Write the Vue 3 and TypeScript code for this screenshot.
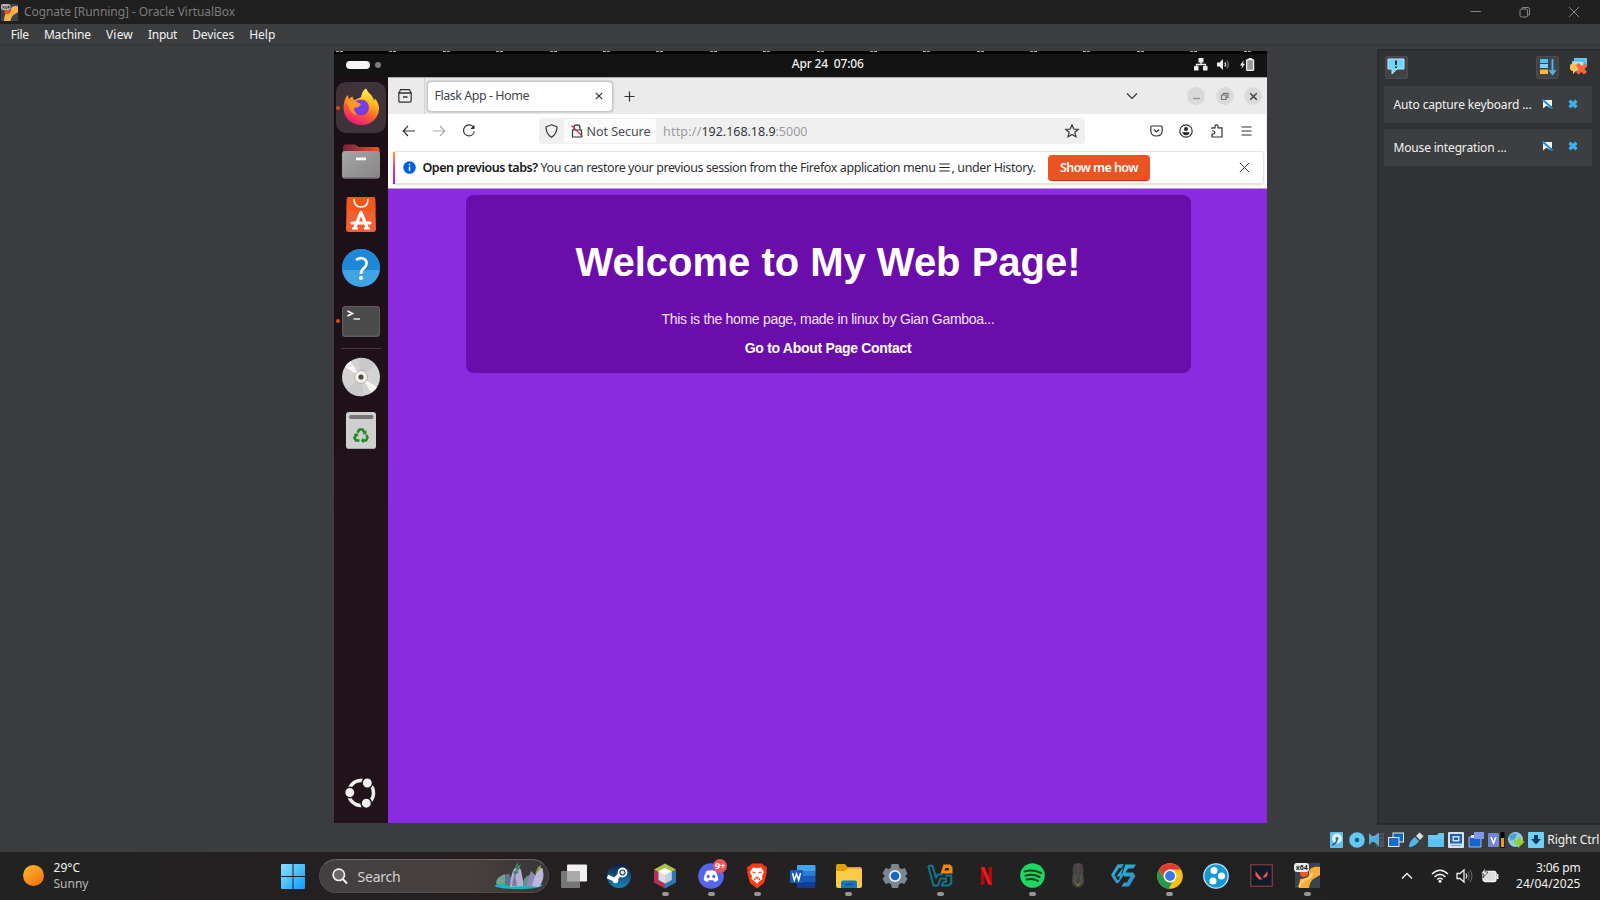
<script setup lang="ts">
import type { Directive } from 'vue'

/* Spreads a label's letters so that it fills the given width in pixels. */
const vFit: Directive<HTMLElement, number> = {
  mounted(el, { value }) {
    const n = (el.textContent ?? '').length
    const natural = el.getBoundingClientRect().width
    if (n > 1) el.style.letterSpacing = `${((value - natural) / n).toFixed(4)}px`
  },
}

const menus: { label: string; width: number }[] = [
  { label: 'File', width: 18 },
  { label: 'Machine', width: 47 },
  { label: 'View', width: 27 },
  { label: 'Input', width: 29 },
  { label: 'Devices', width: 42 },
  { label: 'Help', width: 26 },
]

const notices: { label: string; width: number }[] = [
  { label: 'Auto capture keyboard ...', width: 138 },
  { label: 'Mouse integration ...', width: 113 },
]

const ticks = Array.from({ length: 18 }, (_, i) => i)
</script>

<template>
  <div class="desktop">
    <header class="titlebar">
      <svg class="app-icon" width="17" height="17" viewBox="0 0 25 25">
        <rect width="25" height="25" fill="#3b4250" />
        <path d="M25 3.500C18 2 14 5 14 10C14 14 11 14 6 15L4 25H14C15 20 16 17 20 15L25 12Z" fill="#fbb040" />
        <circle cx="9" cy="11" r="4" fill="#f0542d" />
        <rect x="0" y="0" width="14" height="9" rx="3" fill="#b4b4b4" />
        <path d="M2.500 3L5 6.500M5 3L2.500 6.500M8 2.500L6.500 5V6.500H8.500V5M11.500 6.500V2.500L9.800 5H12.500" stroke="#222" fill="none" />
      </svg>
      <span class="t-title" v-fit="211">Cognate [Running] - Oracle VirtualBox</span>
      <div class="win-controls">
        <svg width="12" height="12" viewBox="0 0 12 12"><path d="M.5 5.500H11" /></svg>
        <svg width="12" height="12" viewBox="0 0 12 12"><rect x="1" y="3" width="7.500" height="8" rx="1.500" /><path d="M3.500 3V1.500H9Q10.500 1.500 10.500 3V9H8.500" /></svg>
        <svg width="12" height="12" viewBox="0 0 12 12"><path d="M1 1L11 11M11 1L1 11" /></svg>
      </div>
    </header>

    <nav class="menubar">
      <span v-for="m in menus" :key="m.label" v-fit="m.width">{{ m.label }}</span>
    </nav>

    <main class="workspace">
      <section class="guest">
        <div class="guest-top">
          <div class="ticks"><i v-for="t in ticks" :key="t"></i></div>
          <div class="gnome">
            <div class="pager"><b></b><i></i></div>
            <span class="clock" v-fit="72">Apr 24&nbsp; 07:06</span>
            <div class="gnome-tray">
              <svg width="14" height="13" viewBox="0 0 14 13"><g fill="#eee"><rect x="4.500" y="0" width="5" height="4.500" /><rect x="0" y="8" width="4.500" height="4.500" rx=".5" /><rect x="9" y="8" width="4.500" height="4.500" rx=".5" /></g><path d="M7 4V6.500M2.500 8.500V6.500H11.500V8.500" stroke="#eee" fill="none" stroke-width="1.300" /></svg>
              <svg width="13" height="13" viewBox="0 0 13 13"><path d="M0 4.500H2.500L6 1V12L2.500 8.500H0Z" fill="#eee" /><path d="M7.800 4.300Q9.500 6.500 7.800 8.700" stroke="#ddd" fill="none" stroke-width="1.300" /><path d="M9.800 2.500Q13 6.500 9.800 10.500" stroke="#777" fill="none" stroke-width="1.200" /></svg>
              <svg width="15" height="13" viewBox="0 0 15 13"><path d="M3.800 2L0 7.500H2.200L1.500 11L5 5.800H3Z" fill="#eee" /><rect x="6.600" y="1.600" width="7" height="10.800" rx="1" fill="#999" stroke="#f2f2f2" stroke-width="1.300" /><rect x="8.500" y="0" width="3.500" height="2" fill="#f2f2f2" /></svg>
            </div>
          </div>
        </div>

        <div class="guest-body">
          <aside class="dock">
            <div class="dock-item active">
              <svg width="50" height="51" viewBox="0 0 50 51">
                <defs>
                  <linearGradient id="ff" x1=".75" y1="0" x2=".3" y2="1"><stop offset="0" stop-color="#fff44f" /><stop offset=".35" stop-color="#ffb01f" /><stop offset=".65" stop-color="#ff5a32" /><stop offset="1" stop-color="#e81282" /></linearGradient>
                  <radialGradient id="ffg"><stop offset="0" stop-color="#6146ef" /><stop offset="1" stop-color="#8838cf" /></radialGradient>
                  <linearGradient id="fft" x1="0" y1="0" x2="0" y2="1"><stop offset="0" stop-color="#fff14a" /><stop offset="1" stop-color="#ffa21d" /></linearGradient>
                </defs>
                <path d="M11.500 13L13 17Q14.500 15 16.500 14.500Q16.500 17 18.500 18Q24 15.500 25.500 15Q26 10 30 6.500Q31.500 10.500 35 13Q37 15 38 19L39 16.500Q43.500 22 43 27.500C42 37 35 43 25.500 43C15.500 43 7.500 36 7.500 26C7.500 20 9 16 11.500 13Z" fill="url(#ff)" />
                <circle cx="25" cy="25.500" r="8" fill="url(#ffg)" />
                <path d="M25 15Q26 9 30 6.500Q31.500 10.500 35 13Q39 18 38 27Q36 20 31 18Q26 16.500 23 18Z" fill="url(#fft)" />
                <path d="M10 16.500L12 19Q19 18 25 22Q23.500 25.500 18 26Q17.500 30 22 33Q15 33 13 25Q10 22 10 16.500Z" fill="#ff9626" />
              </svg>
              <i class="run-dot"></i>
            </div>
            <div class="dock-item">
              <svg width="38" height="35" viewBox="0 0 38 35">
                <defs><linearGradient id="fo"><stop offset="0" stop-color="#77213f" /><stop offset="1" stop-color="#e95420" /></linearGradient><linearGradient id="fg" x1="0" y1="0" x2="1" y2="1"><stop offset="0" stop-color="#a5a5a5" /><stop offset="1" stop-color="#868686" /></linearGradient></defs>
                <path d="M1 3Q1 .5 3.500 .5H13L17 3H35Q37.500 3 37.500 5.500V14H.5Z" fill="url(#fo)" />
                <rect x="0" y="7" width="38" height="27.500" rx="3" fill="url(#fg)" /><path d="M2 34H36" stroke="#666" />
                <rect x="14" y="13.500" width="10" height="2.800" rx=".5" fill="#fff" />
              </svg>
            </div>
            <div class="dock-item">
              <svg width="30" height="35" viewBox="0 0 30 35">
                <path d="M3 0H27Q29 0 29.200 2L30 32Q30 35 27 35H3Q0 35 0 32L.8 2Q1 0 3 0Z" fill="#f06030" /><path d="M.8 2Q1 0 3 0H27Q29 0 29.200 2L29.500 14H.5Z" fill="#f4551d" />
                <path d="M8 2Q8 10 15 10Q22 10 22 2" stroke="#fff" stroke-width="1.500" fill="none" />
                <path d="M9 30L15 15.500L21 30M6 26H24" stroke="#fff" stroke-width="3.200" stroke-linecap="round" stroke-linejoin="round" fill="none" />
                <path d="M6 31.500H12M18 31.500H24" stroke="#fff" stroke-width="1.800" />
              </svg>
            </div>
            <div class="dock-item">
              <svg width="38" height="38" viewBox="0 0 38 38"><circle cx="19" cy="19" r="19" fill="#3fa3e4" /><path d="M0 21V19A19 19 0 0 1 38 19V21Z" fill="#1f87d8" /><path d="M14 11Q19 7.500 23 10.500Q26.500 14.500 22.500 18.500Q19 21 19 25" stroke="#fff" stroke-width="2.700" fill="none" /><circle cx="19" cy="29" r="2" fill="#fff" /></svg>
            </div>
            <div class="dock-item">
              <svg width="38" height="31" viewBox="0 0 38 31"><rect width="38" height="31" rx="3.500" fill="#5e5e5e" /><rect x="1" y="1" width="36" height="28.500" rx="3" fill="#4b4b4b" /><path d="M5.500 5L10.500 7.500L5.500 10" stroke="#fff" stroke-width="1.500" fill="none" /><path d="M11.500 13H18" stroke="#fff" stroke-width="1.300" /></svg>
              <i class="run-dot"></i>
            </div>
            <hr />
            <div class="dock-item">
              <svg width="38" height="38" viewBox="0 0 38 38"><circle cx="19" cy="19" r="19" fill="#d3d3d3" /><path d="M19 19L3 9Q5 5 8.500 3.500ZM19 19L35 29Q33 33 29.500 34.500Z" fill="#f7f7f5" /><path d="M19 19L16 0A19 19 0 0 1 33 6ZM19 19L22 38A19 19 0 0 1 5 32Z" fill="#c9c9c9" /><circle cx="19" cy="19" r="6.500" fill="#f3f0e8" stroke="#b7b2a5" /><circle cx="19" cy="19" r="2.600" fill="#4b4b4b" /></svg>
            </div>
            <div class="dock-item">
              <svg width="30" height="37" viewBox="0 0 30 37"><rect width="30" height="37" rx="3" fill="#cfcfcf" /><path d="M2 36.500H28" stroke="#aaa" /><rect x="3" y="3" width="24.500" height="4" rx="2" fill="#767676" /><g fill="none" stroke="#218c21" stroke-width="2.600"><path d="M11.500 20.500L13.500 17.500H16.500L18.500 20.500" /><path d="M20.500 23L21.500 25.500L20 28.500H17" /><path d="M13.500 28.500H10L8.500 26L10 23" /></g><path d="M20.500 18V22.500H16.500ZM17.500 25.500V31.500L14.800 28.500ZM7.500 22.500L11.500 20.800L12.500 24.500Z" fill="#218c21" /></svg>
            </div>
            <div class="dock-launch">
              <svg width="32" height="32" viewBox="0 0 32 32"><circle cx="16" cy="16" r="12.500" fill="none" stroke="#f1f1f1" stroke-width="3.500" /><g fill="#f1f1f1" stroke="#22121a" stroke-width="1.500"><circle cx="4.800" cy="15.500" r="5.200" /><circle cx="22.300" cy="6" r="5.200" /><circle cx="21.300" cy="26.200" r="5.200" /></g></svg>
            </div>
          </aside>

          <div class="browser">
            <div class="tabstrip">
              <div class="fxview"><svg width="14" height="14" viewBox="0 0 14 14"><path d="M2.500 .6H11.500L13 4H1Z" /><path d="M.8 4H13.200V11.500Q13.200 13.200 11.500 13.200H2.500Q.8 13.200 .8 11.500Z" /><path d="M5 8H9.500" stroke-width="1.500" /></svg></div>
              <div class="tab">
                <span v-fit="94.500">Flask App - Home</span>
                <svg width="8" height="8" viewBox="0 0 8 8"><path d="M.8 .8L7.200 7.200M7.200 .8L.8 7.200" /></svg>
              </div>
              <svg class="plus" width="11" height="11" viewBox="0 0 11 11"><path d="M5.500 .5V10.500M.5 5.500H10.500" /></svg>
              <svg class="chev" width="12" height="8" viewBox="0 0 12 8"><path d="M1 1.500L6 6.500L11 1.500" /></svg>
              <div class="circ"><svg width="9" height="9" viewBox="0 0 9 9"><path d="M1 6.500H8" stroke="#999" stroke-width="1.500" /></svg></div>
              <div class="circ"><svg width="9" height="9" viewBox="0 0 9 9"><path d="M1.500 3H6V7.500H1.500ZM3.500 3V1.300H8V5.500H6" stroke="#777" /></svg></div>
              <div class="circ"><svg width="9" height="9" viewBox="0 0 9 9"><path d="M1.200 1.200L7.800 7.800M7.800 1.200L1.200 7.800" stroke="#444" stroke-width="1.500" /></svg></div>
            </div>

            <div class="toolbar">
              <svg class="ic-back" width="14" height="12" viewBox="0 0 14 12"><path d="M6 1L1.200 6L6 11M1.500 6H13" /></svg>
              <svg class="ic-fwd" width="14" height="12" viewBox="0 0 14 12"><path d="M8 1L12.800 6L8 11M12.500 6H1" /></svg>
              <svg class="ic-reload" width="14" height="14" viewBox="0 0 14 14"><path d="M11.500 3.200A5.500 5.500 0 1 0 12.400 7.500" /><path d="M12.500 .8V5H8.300Z" fill="#333" stroke="none" /></svg>
              <div class="urlbar">
                <svg class="shield" width="13" height="14" viewBox="0 0 13 14"><path d="M6.500 .8L12 2.800C12 8 10.500 11 6.500 13.200C2.500 11 1 8 1 2.800Z" /></svg>
                <div class="insecure">
                  <svg width="12" height="14" viewBox="0 0 12 14"><path d="M3 6V3.500Q3 .8 6 .8Q9 .8 9 3.500V6M1.500 6H10.500V13H1.500Z" /><path d="M.5 1.500L11.500 12.500" stroke="#e22850" stroke-width="1.200" /></svg>
                  <span v-fit="64">Not Secure</span>
                </div>
                <div class="url"><span v-fit="38.500">http://</span><b v-fit="74">192.168.18.9</b><span v-fit="32">:5000</span></div>
                <svg class="star" width="14" height="14" viewBox="0 0 14 14"><path d="M7 1L8.800 5L13.200 5.400L9.900 8.300L10.900 12.800L7 10.400L3.100 12.800L4.100 8.300L.8 5.400L5.200 5Z" /></svg>
              </div>
              <svg class="ic-pocket" width="13" height="12" viewBox="0 0 13 12"><path d="M2 1H11Q12.200 1 12.200 2.200V5.500Q12.200 11 6.500 11Q.8 11 .8 5.500V2.200Q.8 1 2 1ZM3.800 4.500L6.500 7L9.200 4.500" /></svg>
              <svg class="ic-acct" width="14" height="14" viewBox="0 0 14 14"><circle cx="7" cy="7" r="6.200" /><circle cx="7" cy="5" r="2" fill="#222" stroke="none" /><path d="M3.300 8.300H10.700Q10 11.200 7 11.200Q4 11.200 3.300 8.300Z" fill="#222" stroke="none" /></svg>
              <svg class="ic-ext" width="14" height="14" viewBox="0 0 14 14"><path d="M2 5V3.800H5V2.500Q5 .8 6.500 .8Q8 .8 8 2.500V3.800H12V13H2V10H3.200Q4.800 10 4.800 8.500Q4.800 7 3.200 7H2" /></svg>
              <svg class="ic-menu" width="11" height="10" viewBox="0 0 11 10"><path d="M.5 1H10.500M.5 5H10.500M.5 9H10.500" /></svg>
            </div>

            <div class="infowrap">
              <div class="infobar">
                <i class="stripe"></i>
                <svg class="info" width="13" height="13" viewBox="0 0 13 13"><circle cx="6.500" cy="6.500" r="6.300" fill="#0560df" /><path d="M6.500 5.500V10M6.500 2.800V4.200" stroke="#fff" stroke-width="1.400" /></svg>
                <b v-fit="115">Open previous tabs?</b>
                <span class="msg" v-fit="395">You can restore your previous session from the Firefox application menu</span>
                <svg class="burger" width="11" height="9" viewBox="0 0 11 9"><path d="M.3 1H10.700M.3 4.500H10.700M.3 8H10.700" stroke="#222" stroke-width="1.100" /></svg>
                <span v-fit="84">, under History.</span>
                <button><span v-fit="78">Show me how</span></button>
                <svg class="close" width="11" height="11" viewBox="0 0 11 11"><path d="M.8 .8L10.200 10.200M10.200 .8L.8 10.200" stroke="#333" /></svg>
              </div>
            </div>

            <div class="page">
              <div class="hero">
                <h1><span v-fit="505">Welcome to My Web Page!</span></h1>
                <p><span v-fit="333">This is the home page, made in linux by Gian Gamboa...</span></p>
                <div class="links"><a v-fit="166.500">Go to About Page Contact</a></div>
              </div>
            </div>
          </div>
        </div>
      </section>

      <aside class="notify">
        <div class="notify-tools">
          <div class="tool"><svg width="18" height="18" viewBox="0 0 18 18"><path d="M1 1H17V11H10L5 16V11H1Z" fill="#74d4f7" stroke="#b6eaff" /><path d="M9 2.500V7M9 8.500V10" stroke="#222" stroke-width="1.800" /></svg></div>
          <div class="tool order"><svg width="18" height="18" viewBox="0 0 18 18"><path d="M1 1H9V5H1Z" fill="#52bff5" /><path d="M1 6H9V10H1Z" fill="#75d7ff" /><path d="M1 11.500H9V16H1Z" fill="#fbb832" /><path d="M13.500 1V15M10.500 12L13.500 16L16.500 12" stroke="#4bb8f2" stroke-width="1.900" fill="none" /></svg></div>
          <svg class="clear" width="18" height="18" viewBox="0 0 18 18"><path d="M4 1H17V8H4Z" fill="#66c6f1" /><path d="M2 4H14V10H2Z" fill="#a6e6ff" stroke="#3283b6" stroke-width=".6" /><path d="M0 9Q0 6.500 3 6.500H9V14H6L3 17V14Q0 14 0 11Z" fill="#f7c35f" /><path d="M6 8L9 6L11.500 9L15 6.500L17.500 9L14.500 12L17 15L14 17.500L11.500 15L8.500 17.500L6 15L8.500 12Z" fill="#f5653c" /></svg>
        </div>
        <div v-for="n in notices" :key="n.label" class="notice">
          <span v-fit="n.width">{{ n.label }}</span>
          <svg class="pin" width="11" height="10" viewBox="0 0 11 10"><path d="M1 1H10V7H8L9 9.500L5 7H4L1 9.500Z" fill="#f3f3f3" /><path d="M.5 .5L10.500 9.500" stroke="#1689d6" stroke-width="1.900" /></svg>
          <svg width="10" height="10" viewBox="0 0 10 10"><path d="M1.500 1.800L8.500 8.200M8.500 1.800L1.500 8.200" stroke="#3fb0f2" stroke-width="3.300" /></svg>
        </div>
      </aside>
    </main>

    <div class="statusbar">
      <svg width="16" height="16" viewBox="0 0 16 16"><rect x="1" width="13" height="16" rx="1" fill="#67bde9" /><circle cx="8" cy="6.500" r="5" fill="#d9f2ff" /><circle cx="8" cy="6.500" r="1.500" fill="#246ba2" /><path d="M8 8Q7 12 3 13" stroke="#20608c" stroke-width="1.500" fill="none" /></svg>
      <svg width="16" height="16" viewBox="0 0 16 16"><circle cx="9" cy="8" r="7.800" fill="#62c9f5" /><circle cx="9" cy="8" r="2.200" fill="#125a8a" /></svg>
      <svg width="16" height="16" viewBox="0 0 16 16"><rect x="8" y="1" width="8" height="14" fill="#4f565b" /><path d="M9 4H15M9 8H15M9 12H15" stroke="#343b40" /><path d="M1 1L4 4H6L11 1V14L6 10H4L1 13Z" fill="#56abd8" /></svg>
      <svg width="16" height="16" viewBox="0 0 16 16"><rect x="5" y="1" width="10.500" height="9" fill="#1665bd" stroke="#d9ebf8" /><rect x=".5" y="5.500" width="10.500" height="9" fill="#176bd0" stroke="#d9ebf8" /></svg>
      <svg width="16" height="16" viewBox="0 0 16 16"><path d="M1 15Q1 9 7 5L11 9Q7 15 1 15Z" fill="#4eb7e8" /><path d="M8 4L12 8L15.500 4L11.500 .5Z" fill="#e0e0e0" stroke="#888" stroke-width=".5" /></svg>
      <svg width="16" height="16" viewBox="0 0 16 16"><path d="M0 3H9L11 1H16V15H0Z" fill="#69c9ef" /><path d="M0 7H16V15H0Z" fill="#5cc3f0" /></svg>
      <svg width="16" height="16" viewBox="0 0 16 16"><rect width="16" height="16" rx="1" fill="#d3e1f4" /><rect x="2" y="2" width="12" height="9.500" fill="#1a5fb8" /><rect x="4.500" y="4" width="7" height="5.500" fill="#d3e1f4" /><rect x="6" y="5.500" width="4" height="2.500" fill="#1a5fb8" /><path d="M3 13.500H13" stroke="#7d9cc4" /></svg>
      <svg width="16" height="16" viewBox="0 0 16 16"><path d="M1 5H13V15H1Z" fill="#1764c8" stroke="#8fc1ee" /><rect x="6" y="0" width="10" height="7" fill="#8295e9" /><rect x="3" y="3" width="3" height="3" fill="#d3e6ff" /></svg>
      <svg width="16" height="16" viewBox="0 0 16 16"><rect x="0" y="1" width="11" height="14" rx="1" fill="#7189d5" /><path d="M3 5L5.500 11L8 5" fill="none" stroke="#fff" stroke-width="1.500" /><rect x="12.500" y="0" width="4" height="16" fill="#090909" /><rect x="13" y="6" width="3" height="9" fill="#e99910" /></svg>
      <svg width="16" height="16" viewBox="0 0 16 16"><circle cx="7.500" cy="7.500" r="7.500" fill="#8fcbe8" /><path d="M1 5Q4 0 9 2L7 7L3 9Z" fill="#4aa3c8" /><path d="M6 8H10V4L16.500 10L10 16V12.500H6Z" fill="#8ed334" /></svg>
      <svg width="16" height="16" viewBox="0 0 16 16"><rect width="16" height="16" rx="1" fill="#70cff6" /><path d="M6 3H10V7H13L8 12.500L3 7H6Z" fill="#12395a" /></svg>
      <span v-fit="52">Right Ctrl</span>
    </div>

    <footer class="taskbar">
      <div class="weather">
        <i class="sun"></i>
        <div><span class="temp" v-fit="26.500">29°C</span><span class="cond" v-fit="35">Sunny</span></div>
      </div>
      <svg class="start" width="24" height="25" viewBox="0 0 24 25"><defs><linearGradient id="wg" x1="0" y1="0" x2="1" y2="1"><stop offset="0" stop-color="#8be1ff" /><stop offset="1" stop-color="#0b9bfb" /></linearGradient></defs><path d="M1 0H11.500V12H0V1Q0 0 1 0ZM12.500 0H23Q24 0 24 1V12H12.500ZM0 13H11.500V25H1Q0 25 0 24ZM12.500 13H24V24Q24 25 23 25H12.500Z" fill="url(#wg)" /></svg>
      <div class="search">
        <svg width="16" height="17" viewBox="0 0 16 17"><circle cx="6.800" cy="6.800" r="5.700" fill="#6a6768" stroke="#f0f0f0" stroke-width="1.700" /><path d="M10.800 11L15 15.500" stroke="#f0f0f0" stroke-width="1.900" /></svg>
        <span v-fit="43">Search</span>
        <svg class="scene" width="52" height="28" viewBox="0 0 52 28"><path d="M1 24Q8 19 25 20Q42 20 50 23Q46 27 26 27Q6 27 1 24Z" fill="#13b7bd" /><path d="M3 22Q3 16 8 14Q11 11 15 14L17 22Z" fill="#6ea58a" /><path d="M12 23V14L15 11L18 15V24Z" fill="#60718b" /><path d="M17 25Q18 9 22 6Q26 4 28 8L31 24Z" fill="#b5b0d6" /><path d="M19 24Q20 14 22 11L24 24Z" fill="#8379a8" /><path d="M23 9V3L25 0V4L28 2L26 8ZM20 10Q23 7 26 10L22 13Z" fill="#3d8566" /><path d="M30 20Q32 13 38 13V24H30Z" fill="#5d9380" /><path d="M33 24L38 9L42 13V25Z" fill="#8f88b8" /><path d="M39 24Q42 12 46 6Q50 5 50 9Q52 17 46 25Z" fill="#bbb7dd" /><path d="M42 12L45 5L48 3L47 8Z" fill="#8ca23d" /></svg>
      </div>

      <div class="apps">
        <div class="app"><svg width="26" height="26" viewBox="0 0 26 26"><rect x="6" y="1.500" width="20" height="17" rx="1" fill="#f2f2f2" /><rect x="0" y="8" width="19" height="17" rx="1" fill="#777" /><path d="M6 8H19V18.500H6Z" fill="#aaa" /></svg></div>
        <div class="app"><svg width="24" height="24" viewBox="0 0 24 24"><defs><linearGradient id="st" x1="0" y1="0" x2="0" y2="1"><stop offset="0" stop-color="#101d45" /><stop offset="1" stop-color="#1588bd" /></linearGradient></defs><circle cx="12" cy="12" r="12" fill="url(#st)" /><path d="M.5 12.500L8 15.800L13 10" stroke="#fff" stroke-width="4" fill="none" /><circle cx="15.500" cy="8.500" r="4" fill="#19406c" stroke="#fff" stroke-width="1.800" /><circle cx="15.500" cy="8.500" r="2" fill="#d7e2ee" /><circle cx="8.500" cy="16.500" r="2.800" fill="#fff" /></svg></div>
        <div class="app run"><svg width="24" height="26" viewBox="0 0 24 26"><path d="M12 .5L23 6.500L12 13L1 6.500Z" fill="#a9c347" /><path d="M1 6.500V19.500L12 25.500V13Z" fill="#b33254" /><path d="M23 6.500V19.500L12 25.500V13Z" fill="#2f78b8" /><path d="M12 5L18.500 8.500V17L12 20.500L5.500 17V8.500Z" fill="#d7dfe2" /><path d="M12 5L18.500 8.500L12 12L5.500 8.500Z" fill="#fff" /><path d="M12 12L18.500 8.500V17L12 20.500Z" fill="#c3d0d8" /></svg></div>
        <div class="app run">
          <svg width="26" height="26" viewBox="0 0 26 26"><circle cx="13" cy="13" r="12.800" fill="#5765ee" /><path d="M8.500 8Q13 6.500 17.500 8Q20 12 20.300 17Q18.500 18.500 16.500 19L15.300 17.200H10.700L9.500 19Q7.500 18.500 5.700 17Q6 12 8.500 8Z" fill="#fff" /><ellipse cx="10.200" cy="13.500" rx="1.500" ry="1.800" fill="#5765ee" /><ellipse cx="15.800" cy="13.500" rx="1.500" ry="1.800" fill="#5765ee" /></svg>
          <em>9+</em>
        </div>
        <div class="app run"><svg width="22" height="26" viewBox="0 0 22 26"><path d="M6 .5H16L18.500 3L21 4L20.500 8L21 9L18 20L11 25.500L4 20L1 9L1.500 8L1 4L3.500 3Z" fill="#f83a17" /><path d="M11 5L15 4.500L18 9L16 13L16.500 16L13 18.500L11 21L9 18.500L5.500 16L6 13L4 9L7 4.500Z" fill="#fff" /><path d="M6.500 9L9.500 10M15.500 9L12.500 10M9.500 14L11 15.500L12.500 14M8 15.500L9.500 17M14 15.500L12.500 17" fill="none" stroke="#f83a17" stroke-width="1.200" /></svg></div>
        <div class="app"><svg width="26" height="24" viewBox="0 0 26 24"><path d="M7 1H24.500Q25.500 1 25.500 2V7H7Z" fill="#41a5ee" /><path d="M7 7H25.500V12.500H7Z" fill="#2b7cd3" /><path d="M7 12.500H25.500V18H7Z" fill="#185abd" /><path d="M7 18H25.500V23Q25.500 24 24.500 24H8Q7 24 7 23Z" fill="#103f91" /><rect x="0" y="6" width="13" height="13" rx="1" fill="#185abd" /><path d="M2.500 9L4.300 16L6.500 10L8.700 16L10.500 9" stroke="#fff" stroke-width="1.500" fill="none" /></svg></div>
        <div class="app run"><svg width="26" height="24" viewBox="0 0 26 24"><path d="M0 2Q0 0 2 0H9L11.500 3H24Q26 3 26 5V10H0Z" fill="#e0a111" /><path d="M0 7H9L12 4.500H24Q26 4.500 26 6.500V22Q26 24 24 24H2Q0 24 0 22Z" fill="#fbcb43" /><path d="M5 24V18.500Q5 16.500 7 16.500H19Q21 16.500 21 18.500V24Z" fill="#1478c1" /><path d="M9 20.500H17" stroke="#0b4f89" stroke-width="1.500" /></svg></div>
        <div class="app"><svg width="26" height="26" viewBox="0 0 26 26"><path d="M9.500 1H16.500L17.500 5L20 6L23 5L25.500 11L23 13L25.500 15.500L22.500 21L19 20L17 21.500L16 25H10L9 21.500L7 20L3.500 21L.5 15.500L3 13L.5 10.500L3.500 5L7 6L8.500 5Z" fill="#7b8791" /><circle cx="13" cy="13" r="6" fill="#e9edf0" /><circle cx="13" cy="13" r="4.300" fill="#176abb" /></svg></div>
        <div class="app run"><svg width="26" height="24" viewBox="0 0 26 24"><path d="M1.200 1.700H5.500L9 14L10.500 10.500H16M1.200 1.700L6.500 21.500H11L13.500 14.500H19V18H16.500L14.500 21.500H22L24.300 19V11.500H18" stroke="#12748a" stroke-width="2" fill="none" stroke-linejoin="round" /><path d="M13.500 9.500L16.500 .5H23L25.500 3V9.500ZM18.500 4L17.500 6.500H22V4Z" fill="#ef8712" fill-rule="evenodd" /></svg></div>
        <div class="app"><svg width="11" height="18" viewBox="0 0 11 18"><path d="M0 0H3.500V17.500L0 18ZM7.500 0H11V18L7.500 17.500Z" fill="#b30710" /><path d="M0 0H3.500L11 18L7.300 17.500Z" fill="#ef1720" /></svg></div>
        <div class="app run"><svg width="25" height="25" viewBox="0 0 25 25"><circle cx="12.500" cy="12.500" r="12.300" fill="#1ed760" /><path d="M4.500 8.500Q13 6 21 10M5.500 12.700Q13 10.500 19.500 14M6.500 16.500Q13 15 18 18" stroke="#123c22" stroke-width="2" stroke-linecap="round" fill="none" /></svg></div>
        <div class="app"><svg width="14" height="25" viewBox="0 0 14 25"><path d="M3 1Q7-1 11 1Q13 5 12 11Q14 19 12 22Q7 27 2 22Q0 19 2 11Q1 5 3 1Z" fill="#474543" /><path d="M7 1V9M2 12L5 14L3 18L7 23L11 18L9 14L12 12" stroke="#696561" stroke-width=".8" fill="none" /><ellipse cx="7" cy="6" rx="1.500" ry="2.200" fill="#5d3567" /><path d="M5 20L7 23L9 20" stroke="#a67a41" stroke-width=".7" fill="none" /></svg></div>
        <div class="app"><svg width="25" height="23" viewBox="0 0 25 23"><defs><linearGradient id="th" x1="0" x2="1" y1="0" y2="1"><stop offset="0" stop-color="#1fc4cf" /><stop offset="1" stop-color="#3e79c7" /></linearGradient></defs><path d="M13 0L6.500 .5L0 11L5 19H7.500L9 16H6.500L3.500 11L8 4H10.500Z" fill="url(#th)" /><path d="M12.500 3L5.500 12.500H9L6.500 20L14 9.500H10.500Z" fill="url(#th)" /><path d="M14.500 .5H25L22.500 4.500H17L14.500 8.500H22L24.500 12L18 22.500H10.500L13 18.500H16L19.500 12.500H13.500L11.500 9Z" fill="url(#th)" /></svg></div>
        <div class="app run"><svg width="26" height="26" viewBox="0 0 26 26"><circle cx="13" cy="13" r="12.800" fill="#fbc116" /><path d="M1.900 6.600A12.800 12.800 0 0 1 24.100 6.600H13A6.400 6.400 0 0 0 7.500 16.200Z" fill="#df3d31" /><path d="M1.900 6.600L7.500 16.200A6.400 6.400 0 0 0 15.500 18.800L11.800 25.800A12.800 12.800 0 0 1 1.900 6.600Z" fill="#26984b" /><circle cx="13" cy="13" r="6.400" fill="#fff" /><circle cx="13" cy="13" r="4.900" fill="#3676e8" /></svg></div>
        <div class="app"><svg width="26" height="26" viewBox="0 0 26 26"><circle cx="13" cy="13" r="12.200" fill="#1798d6" stroke="#bae6fa" stroke-width="1.300" /><g fill="#fff"><circle cx="11" cy="7.500" r="3.500" /><circle cx="18.500" cy="13" r="3.500" /><circle cx="10" cy="18" r="3.500" /></g></svg></div>
        <div class="app"><svg width="23" height="23" viewBox="0 0 23 23"><rect x=".7" y=".7" width="21.600" height="21.600" fill="#101d27" stroke="#7c333a" stroke-width="1.400" /><path d="M5.500 7L12.500 15.500H9L5.500 11.500ZM17.500 7V11.500L15.500 13.500H12.500Z" fill="#f4515d" /></svg></div>
        <div class="app run">
          <svg width="25" height="25" viewBox="0 0 25 25"><rect width="25" height="25" fill="#3b4250" /><path d="M25 4C18 3 14 5 14 10C14 15 11 15 5 16L4 25H14C15 20 16 17 20 15L25 12Z" fill="#f9ad38" /><path d="M4 24Q6 17 12 16Q16 15 17 10" stroke="#ffd16d" stroke-width="2" fill="none" /><circle cx="9" cy="10" r="4" fill="#ee592b" /></svg>
          <small>x64</small>
        </div>
      </div>

      <div class="tray">
        <svg class="up" width="12" height="8" viewBox="0 0 12 8"><path d="M1 6.500L6 1.500L11 6.500" stroke="#eee" stroke-width="1.500" fill="none" /></svg>
        <svg class="wifi" width="18" height="14" viewBox="0 0 18 14"><path d="M1 5Q9-2.500 17 5M3.500 8Q9 2.800 14.500 8M6.200 10.500Q9 8 11.800 10.500" stroke="#f2f2f2" stroke-width="1.500" fill="none" /><circle cx="9" cy="12.300" r="1.500" fill="#f2f2f2" /></svg>
        <svg class="vol" width="17" height="14" viewBox="0 0 17 14"><path d="M1 4.500H4L8 1V13L4 9.500H1Z" stroke="#eee" stroke-width="1.300" fill="none" /><path d="M10 4.500Q11.500 7 10 9.500" stroke="#eee" fill="none" stroke-width="1.200" /><path d="M12 2.500Q14.500 7 12 11.500M14 1Q18 7 14 13" stroke="#6c6c6c" fill="none" /></svg>
        <svg class="bat" width="18" height="15" viewBox="0 0 18 15"><rect x="2" y="2.500" width="13" height="10" rx="2" fill="#ddd" stroke="#f4f4f4" stroke-width="1.300" /><path d="M16.500 5V10" stroke="#fff" stroke-width="1.800" /><path d="M4-1L0 5H3L2 9L7 3H4Z" fill="#fff" stroke="#222" stroke-width=".7" /></svg>
        <div class="time"><span v-fit="44.500">3:06 pm</span><span v-fit="64.500">24/04/2025</span></div>
      </div>
    </footer>
  </div>
</template>

<style>
body { margin: 0; background: #3b3c3d; overflow: hidden; }
</style>

<style scoped>
* { box-sizing: border-box; }
.desktop { width: 1600px; height: 900px; display: flex; flex-direction: column; background: #3b3c3d; font-family: "Noto Sans", "Open Sans", sans-serif; font-size: 12px; color: #f2f2f2; overflow: hidden; }
span, b, a { white-space: nowrap; display: inline-block; }
svg { display: block; flex: none; overflow: visible; }

.titlebar { height: 24px; flex: none; background: #202020; display: flex; align-items: center; padding: 0 20px 0 1px; }
.t-title { margin-left: 6px; color: #7c7c7c; font-size: 12px; line-height: 24px; }
.win-controls { margin-left: auto; display: flex; gap: 37px; }
.win-controls svg { fill: none; stroke: #858585; stroke-width: 1; }
.menubar { height: 21px; flex: none; display: flex; gap: 15.100px; padding-left: 10.800px; background: #3c3d3f; border-bottom: 1px solid #353638; line-height: 21px; font-size: 12px; }

.workspace { height: 780px; flex: none; display: flex; padding-left: 334px; }
.guest { width: 933px; height: 772px; margin-top: 6px; display: flex; flex-direction: column; background: #22121a; }
.guest-top { height: 26px; background: #131313; }
.ticks { height: 3px; background: #000; display: flex; gap: 46.400px; padding-left: 2px; overflow: hidden; }
.ticks i { width: 7px; height: 1px; flex: none; background: repeating-linear-gradient(90deg, #aaa 0 3px, #222 3px 4px); }
.gnome { height: 23px; display: grid; grid-template-columns: 1fr auto 1fr; align-items: center; padding: 0 12.500px 2px 12px; }
.pager { display: flex; align-items: center; gap: 5px; }
.pager b { width: 24px; height: 8px; border-radius: 4px; background: #f6f6f6; }
.pager i { width: 6px; height: 6px; border-radius: 50%; background: #7e7e7e; }
.clock { margin-left: 55px; margin-top: -2px; font-weight: 500; color: #eee; font-size: 12px; line-height: 20px; }
.gnome-tray { display: flex; justify-content: flex-end; gap: 9.500px; align-items: center; }

.guest-body { flex: 1; display: flex; min-height: 0; }
.dock { width: 54px; display: flex; flex-direction: column; background: linear-gradient(#1b0e16, #22131b 60%, #22121a); padding-top: 4px; }
.dock-item { position: relative; height: 53.400px; display: flex; align-items: center; justify-content: center; flex: none; }
.dock-item.active svg { background: #3f3238; border-radius: 10px; }
.run-dot { position: absolute; left: 2px; top: 24.500px; width: 4px; height: 4px; border-radius: 50%; background: #dc4b17; }
.dock hr { width: 40px; height: 1px; margin: 0.500px auto; border: 0; background: #47383e; flex: none; }
.dock-launch { margin-top: auto; height: 62px; display: flex; justify-content: center; padding-top: 16px; }

.browser { flex: 1; min-width: 0; display: flex; flex-direction: column; background: #fff; font-size: 12.500px; }
.tabstrip { height: 37px; flex: none; display: flex; align-items: center; background: #ebebeb; border-top: 1px solid #aaa; padding-right: 5px; }
.tabstrip svg, .toolbar svg { fill: none; stroke: #333; stroke-width: 1.200; }
.fxview { width: 37px; height: 36px; border-right: 1px solid #d2d2d2; padding: 11px 0 0 10px; }
.tab { width: 186px; height: 31px; margin-left: 2px; border-radius: 4px; background: #fff; border: 1px solid #c8c8c8; box-shadow: 0 0 2px #999; display: flex; align-items: center; justify-content: space-between; padding: 0 9px 1px 6.500px; color: #44444b; }
.plus { margin-left: 11.500px; }
.chev { margin-left: 491px; }
.circ { width: 18px; height: 18px; border-radius: 50%; background: #dadada; display: grid; place-items: center; margin-left: 10.300px; flex: none; }
.chev + .circ { margin-left: 49px; }
.toolbar { height: 37px; flex: none; display: flex; align-items: center; padding: 0 14px 3px; border-right: 1px solid #eee; }
.toolbar .ic-fwd { margin-left: 15.500px; stroke: #aaa; }
.ic-reload { margin-left: 16px; }
.urlbar { width: 548px; height: 26px; margin-left: 63.500px; border-radius: 4px; background: #f0f0f1; display: flex; align-items: center; padding-left: 6px; padding-right: 6px; }
.insecure { height: 24px; width: 92px; margin-left: 6px; border-radius: 3px; background: #fbfbfb; display: flex; align-items: center; gap: 4px; padding-left: 6.500px; color: #4c4c52; }
.url { margin-left: 7px; color: #9b9b9e; display: flex; }
.url b { font-weight: 400; color: #36363b; }
.star { margin-left: auto; }
.ic-pocket { margin-left: 64.500px; }
.ic-acct { margin-left: 16.500px; }
.ic-ext { margin-left: 16.500px; }
.ic-menu { margin-left: 17.500px; }
.infowrap { height: 38px; flex: none; padding: 0 3px 0 4px; border-bottom: 1px solid #b9a0d6; }
.infobar { height: 33px; display: flex; align-items: center; border: 1px solid #e4e4e6; border-left: 0; border-radius: 3px; box-shadow: 0 1px 2px #ddd; color: #303036; }
.stripe { width: 1.500px; height: 32px; margin-left: 1px; background: linear-gradient(#ff9e22, #f23090 50%, #9221ed); }
.info { margin: 0 7px 0 8px; }
.infobar b { font-weight: 600; color: #161618; }
.msg { margin-left: 3px; }
.burger { margin: 0 1.500px 0 3.500px; }
.infobar button { width: 102px; height: 26px; margin-left: 12.500px; padding: 0; border: 0; border-bottom: 1px solid #e12b00; border-radius: 4px; background: #e95420; color: #fff; font: 600 12.500px "Noto Sans", sans-serif; display: grid; place-items: center; }
.infobar .close { margin-left: auto; margin-right: 13px; }

.page { flex: 1; background: #8a2be0; padding-top: 6px; padding-left: 1px; font-family: "Liberation Sans", Arial, sans-serif; color: #fff; }
.hero { width: 725px; height: 178px; margin: 0 auto; border-radius: 8px; background: #6a0dab; text-align: center; padding-top: 43.500px; }
.hero h1 { margin: 0; font-size: 40px; line-height: 46px; font-weight: 700; }
.hero p { margin: 26.500px 0 0; font-size: 14px; line-height: 16px; color: #f0e4f8; }
.links { margin-top: 13px; font-size: 14px; line-height: 16px; font-weight: 700; }

.notify { width: 223px; height: 776px; margin-left: auto; margin-top: 4px; background: #313233; border: 2px solid #2a2b2c; border-right: 0; border-bottom-color: #292a2b; padding: 5px 8px 0 4.500px; }
.notify-tools { height: 30px; display: flex; align-items: flex-start; padding-left: 1px; }
.tool { width: 23px; height: 23px; display: grid; place-items: center; padding-bottom: 2px; background: #424346; border: 1px solid #4c4d4f; border-radius: 2px; }
.order { margin-left: auto; }
.clear { margin: 1px 4px 0 11px; }
.notice { height: 37px; margin-bottom: 5.500px; background: #3d3e40; display: flex; align-items: center; padding: 0 14px 0 10px; font-size: 12px; }
.pin { margin-left: auto; margin-right: 15px; }
.notice svg { margin-bottom: 2px; }

.statusbar { height: 27px; flex: none; display: flex; align-items: center; gap: 3.950px; padding-left: 1328.500px; padding-top: 2px; font-size: 12px; }
.statusbar span { margin-left: -0.500px; }

.taskbar { height: 48px; flex: none; display: flex; align-items: center; background: linear-gradient(90deg, #222222, #251f20 32%, #222223 60%, #202020); }
.weather { width: 281px; display: flex; align-items: center; padding-left: 23px; gap: 9.500px; }
.sun { width: 21px; height: 21px; margin-top: -1px; border-radius: 50%; background: linear-gradient(145deg, #fbbd30, #f26a0b); }
.weather div { display: flex; flex-direction: column; align-items: flex-start; line-height: 16.500px; font-size: 12px; }
.weather .cond { color: #b9b9b9; }
.start { flex: none; }
.search { width: 230px; height: 34px; margin-left: 14px; flex: none; border-radius: 17px; background: linear-gradient(90deg, #434042, #48403f 65%, #393536); border: 1px solid #504b4c; border-top-color: #666; display: flex; align-items: center; padding: 0 3px 0 12px; }
.search span { margin-left: 9.500px; font-size: 14px; color: #d4d0d1; }
.scene { margin-left: auto; }
.apps { display: flex; margin-left: 1.600px; flex: none; height: 48px; }
.app { position: relative; width: 45.870px; height: 47px; display: grid; place-items: center; }
.app.run::after { content: ""; position: absolute; bottom: 3px; left: 19.500px; width: 7px; height: 4px; border-radius: 2px; background: #969696; }
.app em { position: absolute; left: 25px; top: 7px; width: 14px; height: 14px; border-radius: 7px; background: #ee5157; font: 700 9px/14px "Noto Sans", sans-serif; text-align: center; color: #fff; }
.app small { position: absolute; left: 10px; top: 11px; width: 15px; height: 9px; border-radius: 3px; background: #ececec; color: #222; font: 700 7px/9px "Noto Sans", sans-serif; text-align: center; }
.tray { flex: 1; display: flex; align-items: center; padding-right: 19.500px; }
.up { margin-left: auto; }
.wifi { margin-left: 18.500px; }
.vol { margin-left: 7px; }
.bat { margin-left: 8px; }
.time { width: 81.500px; display: flex; flex-direction: column; align-items: flex-end; line-height: 16.500px; }
</style>
